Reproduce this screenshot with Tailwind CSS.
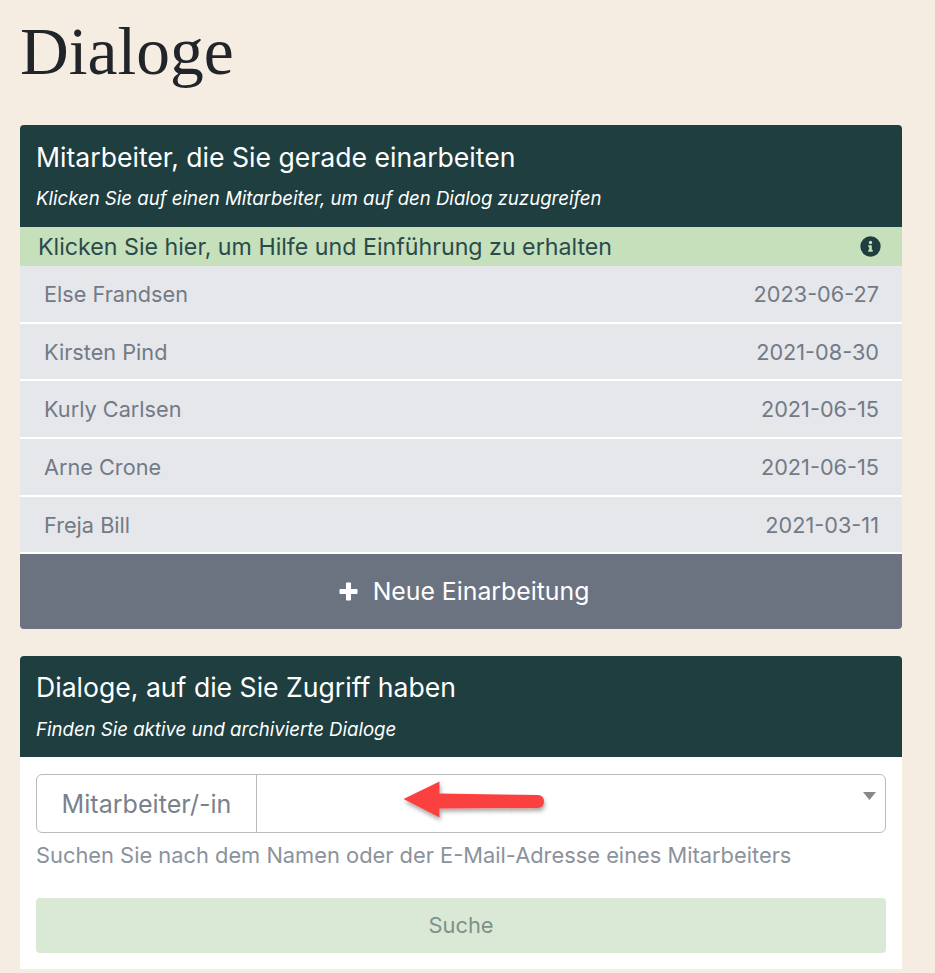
<!DOCTYPE html>
<html>
<head>
  <title>Dialoge</title>
  <script src="https://cdn.jsdelivr.net/npm/@tailwindcss/browser@4"></script>
</head>
<body class="bg-[#f5ede2] font-['Inter',sans-serif] h-[973px] overflow-hidden">
  <main class="pl-5 w-[902px]">
    <h1 class="font-['Liberation_Serif',serif] text-[67.5px] leading-[78px] text-[#212529] pt-[13px] h-[125px]">Dialoge</h1>

    <section class="rounded-[4px] overflow-hidden">
      <div class="bg-[#1e3e40] text-white h-[102px] px-4 pt-[15px]">
        <h2 class="text-[26.6px] leading-[34px]">Mitarbeiter, die Sie gerade einarbeiten</h2>
        <p class="text-[18.6px] leading-[24px] italic mt-[12px]">Klicken Sie auf einen Mitarbeiter, um auf den Dialog zuzugreifen</p>
      </div>
      <div class="bg-[#c5e0bb] text-[#2a4a4b] h-[39px] pt-[1px] pl-[18px] pr-[21px] flex items-center justify-between text-[23.2px]">
        <span>Klicken Sie hier, um Hilfe und Einführung zu erhalten</span>
        <svg class="w-[21px] h-[21px] -mt-[1px]" viewBox="0 0 512 512" fill="#1e3e40"><path d="M256 8a248 248 0 1 0 0 496 248 248 0 0 0 0-496zm0 110a42 42 0 1 1 0 84 42 42 0 0 1 0-84zm56 254c0 7-5 12-12 12h-88c-7 0-12-5-12-12v-24c0-7 5-12 12-12h12v-64h-12c-7 0-12-5-12-12v-24c0-7 5-12 12-12h64c7 0 12 5 12 12v100h12c7 0 12 5 12 12z"/></svg>
      </div>
      <ul class="text-[#737a86] text-[21.7px]">
        <li class="bg-[#e5e7eb] h-[58px] pt-[1px] pl-6 pr-[23px] flex items-center justify-between border-b-[2px] border-white"><span>Else Frandsen</span><span>2023-06-27</span></li>
        <li class="bg-[#e5e7eb] h-[57px] pt-[1px] pl-6 pr-[23px] flex items-center justify-between border-b-[2px] border-white"><span>Kirsten Pind</span><span>2021-08-30</span></li>
        <li class="bg-[#e5e7eb] h-[58px] pt-[1px] pl-6 pr-[23px] flex items-center justify-between border-b-[2px] border-white"><span>Kurly Carlsen</span><span>2021-06-15</span></li>
        <li class="bg-[#e5e7eb] h-[58px] pt-[1px] pl-6 pr-[23px] flex items-center justify-between border-b-[2px] border-white"><span>Arne Crone</span><span>2021-06-15</span></li>
        <li class="bg-[#e5e7eb] h-[57px] pt-[1px] pl-6 pr-[23px] flex items-center justify-between border-b-[2px] border-white"><span>Freja Bill</span><span>2021-03-11</span></li>
      </ul>
      <button class="w-full h-[75px] pl-[6px] bg-[#6b7280] text-white text-[24.8px] flex items-center justify-center gap-[15px]">
        <svg class="w-[19px] h-[19px]" viewBox="0 0 19 19" fill="white"><path d="M7 1.500c0-.6.4-1 1-1h3c.6 0 1 .4 1 1V7h5.500c.6 0 1 .4 1 1v3c0 .6-.4 1-1 1H12v5.500c0 .6-.4 1-1 1H8c-.6 0-1-.4-1-1V12H1.500c-.6 0-1-.4-1-1V8c0-.6.4-1 1-1H7z"/></svg>
        <span>Neue Einarbeitung</span>
      </button>
    </section>

    <section class="mt-[27px] rounded-t-[4px] overflow-hidden bg-white h-[313px]">
      <div class="bg-[#1e3e40] text-white h-[101px] px-4 pt-[14px]">
        <h2 class="text-[26.6px] leading-[34px]">Dialoge, auf die Sie Zugriff haben</h2>
        <p class="text-[18.6px] leading-[24px] italic mt-[13px]">Finden Sie aktive und archivierte Dialoge</p>
      </div>
      <div class="px-4 pt-[17px]">
        <div class="relative flex h-[59px] border-[1.5px] border-[#b9bbbd] rounded-[6px]">
          <div class="w-[220px] pt-[2px] border-r-[1.5px] border-[#b9bbbd] flex items-center justify-center text-[25.1px] text-[#7a818c]">Mitarbeiter/-in</div>
          <div class="flex-1 relative">
            <svg class="absolute right-[9px] top-[17px] w-[13px] h-[8px]" viewBox="0 0 13 8" fill="#888"><path d="M0 0h13L6.500 8z"/></svg>
          </div>
          <svg class="absolute left-[362px] top-[6px] w-[150px] h-[50px]" viewBox="0 0 150 50">
            <defs><filter id="arrowShadow" x="-10%" y="-20%" width="125%" height="150%"><feDropShadow dx="1" dy="3" stdDeviation="2" flood-color="#000" flood-opacity=".35"/></filter></defs>
            <path filter="url(#arrowShadow)" fill="#fb4040" d="M4.500 18 L40.500 .5 L40.500 12.500 L139 14 Q145 14.500 145 20.500 Q145 26.500 139 27 L40.500 27.500 L40.500 36.500 Z"/>
          </svg>
        </div>
        <p class="text-[21.85px] leading-[28px] text-[#8b929c] mt-[8px]">Suchen Sie nach dem Namen oder der E-Mail-Adresse eines Mitarbeiters</p>
        <button class="mt-[29px] w-full h-[55px] rounded-[4px] bg-[#d9e9d5] text-[#7f9189] text-[21.9px] flex items-center justify-center">Suche</button>
      </div>
    </section>
  </main>
</body>
</html>
